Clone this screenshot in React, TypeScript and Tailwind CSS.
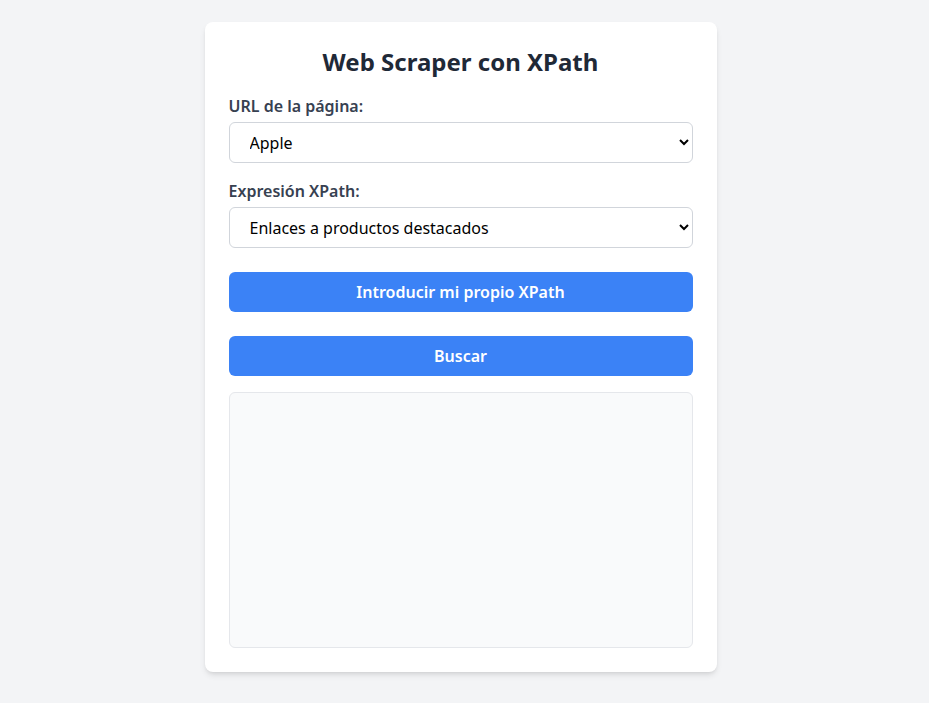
import React from "react";

export default function App() {
  return (
    <div className="min-h-screen bg-[#f3f4f6] pr-2 pt-[22px]" style={{ fontFamily: '"Noto Sans", "Open Sans", sans-serif' }}>
      <div className="mx-auto w-[512px] rounded-lg bg-white p-6 shadow-md">
        <h1 className="mb-4 text-center text-2xl font-bold text-[#1f2937]">Web Scraper con XPath</h1>
        <label className="mb-1 block text-base font-semibold text-[#374151]">URL de la página:</label>
        <select className="mb-4 block h-[41px] w-full rounded-md border border-[#d1d5db] bg-white px-4 text-base text-black">
          <option>Apple</option>
        </select>
        <label className="mb-1 block text-base font-semibold text-[#374151]">Expresión XPath:</label>
        <select className="block h-[41px] w-full rounded-md border border-[#d1d5db] bg-white px-4 text-base text-black">
          <option>Enlaces a productos destacados</option>
        </select>
        <button className="mt-6 block h-10 w-full rounded-md bg-[#3b82f6] text-base font-semibold text-white">
          Introducir mi propio XPath
        </button>
        <button className="mt-6 block h-10 w-full rounded-md bg-[#3b82f6] text-base font-semibold text-white">Buscar</button>
        <div className="mt-4 h-64 w-full rounded-md border border-[#e5e7eb] bg-[#f9fafb]"></div>
      </div>
    </div>
  );
}
